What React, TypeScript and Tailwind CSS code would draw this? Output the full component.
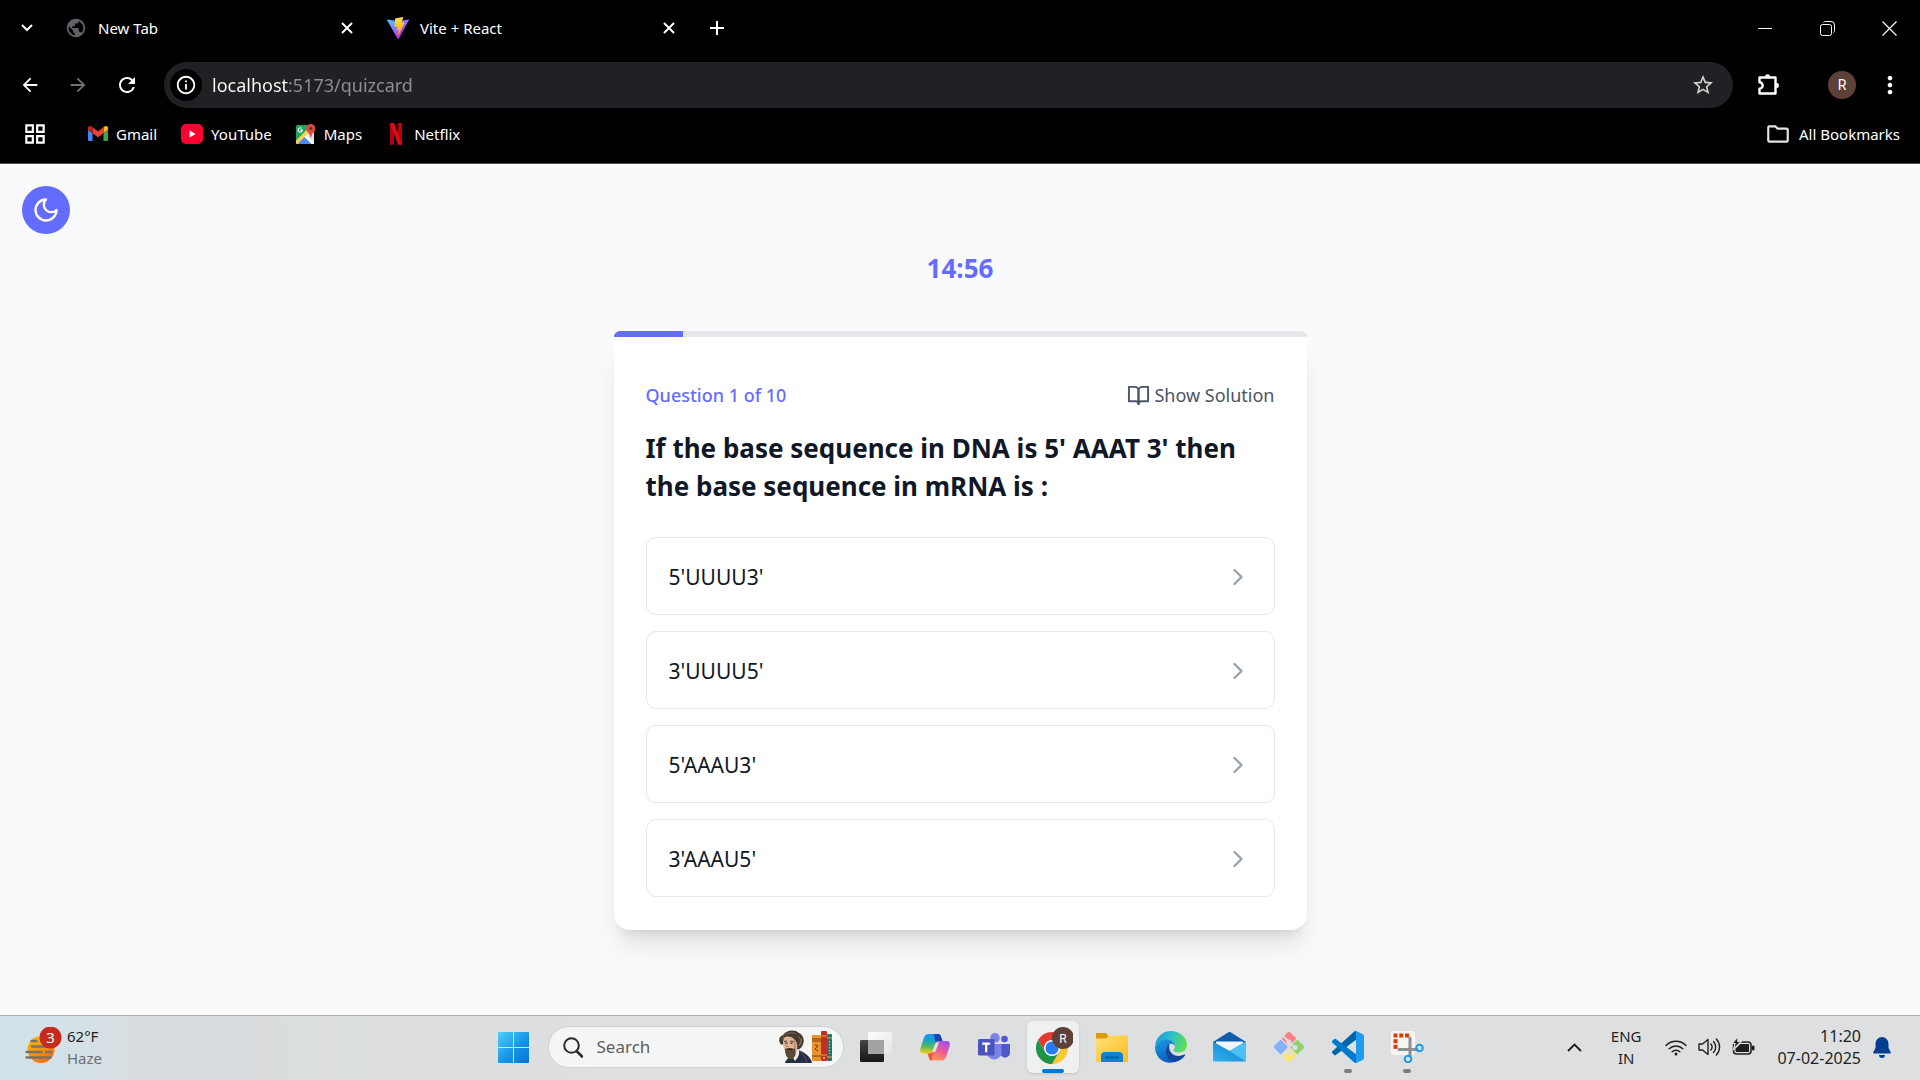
import type { ReactNode } from 'react';
import {
  MdArrowBack,
  MdArrowForward,
  MdGridView,
  MdInfoOutline,
  MdMoreVert,
  MdOutlineFolder,
  MdPublic,
  MdRefresh,
  MdStarBorder,
} from 'react-icons/md';

/* ---------- Browser icons ---------- */

function ChevronDownIcon() {
  return (
    <svg viewBox="0 0 12 8" className="h-2 w-3" fill="none" stroke="#fff" strokeWidth="2">
      <path d="M1 1l5 5 5-5" />
    </svg>
  );
}

function CloseIcon() {
  return (
    <svg viewBox="0 0 12 12" className="size-3" fill="none" stroke="#fff" strokeWidth="2">
      <path d="M1 1l10 10M11 1L1 11" />
    </svg>
  );
}

function PlusIcon() {
  return (
    <svg viewBox="0 0 14 14" className="size-3.5" fill="none" stroke="#fff" strokeWidth="2">
      <path d="M7 0v14M0 7h14" />
    </svg>
  );
}

function ViteIcon() {
  return (
    <svg viewBox="0 0 256 257" className="size-[22px]">
      <defs>
        <linearGradient id="vite-a" x1="-.828%" x2="57.636%" y1="7.652%" y2="78.411%">
          <stop offset="0%" stopColor="#41D1FF" />
          <stop offset="100%" stopColor="#BD34FE" />
        </linearGradient>
        <linearGradient id="vite-b" x1="43.376%" x2="50.316%" y1="2.242%" y2="89.03%">
          <stop offset="0%" stopColor="#FFEA83" />
          <stop offset="8.333%" stopColor="#FFDD35" />
          <stop offset="100%" stopColor="#FFA800" />
        </linearGradient>
      </defs>
      <path
        fill="url(#vite-a)"
        d="M255.153 37.938L134.897 252.976c-2.483 4.44-8.862 4.466-11.382.048L.875 37.958c-2.746-4.814 1.371-10.646 6.827-9.67l120.385 21.517a6.537 6.537 0 0 0 2.322-.004l117.867-21.483c5.438-.991 9.574 4.796 6.877 9.62Z"
      />
      <path
        fill="url(#vite-b)"
        d="M185.432.063L96.44 17.501a3.268 3.268 0 0 0-2.634 3.014l-5.474 92.456a3.268 3.268 0 0 0 3.997 3.378l24.777-5.718c2.318-.535 4.413 1.507 3.936 3.838l-7.361 36.047c-.495 2.426 1.782 4.5 4.151 3.78l15.304-4.649c2.372-.72 4.652 1.36 4.15 3.788l-11.698 56.621c-.732 3.542 3.979 5.473 5.943 2.437l1.313-2.028l72.516-144.72c1.215-2.423-.88-5.186-3.54-4.672l-25.505 4.922c-2.396.462-4.435-1.77-3.759-4.114l16.646-57.705c.677-2.35-1.37-4.583-3.769-4.113Z"
      />
    </svg>
  );
}

function PuzzleIcon() {
  return (
    <svg viewBox="0 0 24 24" className="size-6">
      <path
        d="M2.500 4.500h16v16h-16v-4.800a2.900 2.900 0 0 0 0-6.400z"
        fill="none"
        stroke="#fff"
        strokeWidth="2.400"
        strokeLinejoin="round"
      />
      <path d="M8 3.800a2.500 2.500 0 0 1 5 0zM19.200 9.800a2.600 2.600 0 0 1 0 5.400z" fill="#fff" />
    </svg>
  );
}

function GmailIcon() {
  return (
    <svg viewBox="52 42 88 66" className="h-[15px] w-5">
      <path fill="#4285f4" d="M58 108h14V74L52 59v43c0 3.32 2.69 6 6 6" />
      <path fill="#34a853" d="M120 108h14c3.32 0 6-2.69 6-6V59l-20 15" />
      <path fill="#fbbc04" d="M120 48v26l20-15v-8c0-7.42-8.47-11.65-14.4-7.2" />
      <path fill="#ea4335" d="M72 74V48l24 18 24-18v26L96 92" />
      <path fill="#c5221f" d="M52 51v8l20 15V48l-5.6-4.2c-5.94-4.45-14.4-.22-14.4 7.2" />
    </svg>
  );
}

function YouTubeIcon() {
  return (
    <svg viewBox="0 0 22 20" className="h-5 w-[22px]">
      <rect width="22" height="20" rx="5" fill="#ff0033" />
      <path d="M8.600 6.600v6.800l6-3.400z" fill="#fff" />
    </svg>
  );
}

function MapsIcon() {
  return (
    <svg viewBox="0 0 20 20" className="size-5">
      <clipPath id="maps-clip">
        <rect x="0" y="1" width="18" height="19" rx="1.5" />
      </clipPath>
      <g clipPath="url(#maps-clip)">
        <rect y="1" width="18" height="19" fill="#1ea362" />
        <path d="M0 20L18 2v18z" fill="#dde1e6" />
        <path d="M1.500 20L10 11l8 9z" fill="#4a89f3" />
        <path d="M0 20v-3.500L13.500 3 16 5.500 1.500 20z" fill="#ffd04b" />
        <path d="M8.200 12.700l2-2L18 18.500V20h-2.500z" fill="#fff" />
      </g>
      <path d="M6.800 5.400H4.300v1h1.300a1.500 1.500 0 1 1-.4-1.600l.8-.8a2.600 2.600 0 1 0 .8 1.400z" fill="#fff" />
      <path d="M14.800 0a4.600 4.600 0 0 0-4.600 4.600c0 3.200 3.800 4.600 4.300 9.200h.6c.5-4.600 4.300-6 4.300-9.200A4.600 4.600 0 0 0 14.800 0z" fill="#dc4b3f" />
      <circle cx="14.800" cy="4.500" r="1.600" fill="#7a231e" />
    </svg>
  );
}

function NetflixIcon() {
  return (
    <svg viewBox="-4 0 20 22" className="h-[22px] w-5">
      <path d="M0 0h4v21.5L0 22z" fill="#b1060f" />
      <path d="M8 0h4v22l-4-.5z" fill="#b1060f" />
      <path d="M0 0h4l8 22-4-.5z" fill="#e50914" />
    </svg>
  );
}

/* ---------- Quiz icons ---------- */

function MoonIcon() {
  return (
    <svg viewBox="0 0 24 24" className="size-7" fill="none" stroke="#fff" strokeWidth="2" strokeLinecap="round" strokeLinejoin="round">
      <path d="M12 3a6 6 0 0 0 9 9 9 9 0 1 1-9-9Z" />
    </svg>
  );
}

function BookIcon() {
  return (
    <svg viewBox="0 0 24 24" className="size-[23px]" fill="none" stroke="currentColor" strokeWidth="2" strokeLinecap="round" strokeLinejoin="round">
      <path d="M2 3h6a4 4 0 0 1 4 4v14a3 3 0 0 0-3-3H2z" />
      <path d="M22 3h-6a4 4 0 0 0-4 4v14a3 3 0 0 1 3-3h7z" />
    </svg>
  );
}

function ChevronRightIcon() {
  return (
    <svg viewBox="0 0 24 24" className="size-7 text-gray-400" fill="none" stroke="currentColor" strokeWidth="2" strokeLinecap="round" strokeLinejoin="round">
      <path d="m9 18 6-6-6-6" />
    </svg>
  );
}

/* ---------- Taskbar icons ---------- */

function WeatherIcon() {
  return (
    <svg viewBox="0 0 38 40" className="h-10 w-[38px]">
      <defs>
        <linearGradient id="sun" x1="0" y1="0" x2=".6" y2="1">
          <stop offset="0" stopColor="#ffc400" />
          <stop offset="1" stopColor="#f0700e" />
        </linearGradient>
      </defs>
      <circle cx="17" cy="22.500" r="13.500" fill="url(#sun)" />
      <g stroke="#76736c" strokeWidth="2.400" strokeLinecap="round">
        <path d="M7.500 14h5M8 19.500h20M2.500 25h15M22 25h5M2.500 30.500h24" />
      </g>
      <circle cx="26.500" cy="10.500" r="11" fill="#c42b1c" />
      <text x="26.500" y="15.500" textAnchor="middle" fontSize="15" fill="#fff" fontFamily="Noto Sans, sans-serif">
        3
      </text>
    </svg>
  );
}

function WindowsIcon() {
  return (
    <svg viewBox="0 0 31 31" className="size-[31px]">
      <defs>
        <linearGradient id="win" x1="0" y1="0" x2="1" y2="1" gradientUnits="objectBoundingBox">
          <stop offset="0" stopColor="#4fd0fb" />
          <stop offset=".55" stopColor="#1795e6" />
          <stop offset="1" stopColor="#0275d0" />
        </linearGradient>
      </defs>
      <path d="M1 0h14v15H0V1a1 1 0 0 1 1-1zM16 0h14a1 1 0 0 1 1 1v14H16zM0 16h15v15H1a1 1 0 0 1-1-1zM16 16h15v14a1 1 0 0 1-1 1H16z" fill="url(#win)" />
    </svg>
  );
}

function SearchIcon() {
  return (
    <svg viewBox="0 0 20 21" className="h-[21px] w-5" fill="none" stroke="#2b2b2b" strokeLinecap="round">
      <circle cx="8.500" cy="8.500" r="7.300" strokeWidth="2" />
      <path d="M14 14.500l5 5" strokeWidth="2.600" />
    </svg>
  );
}

function AuthorIcon() {
  return (
    <svg viewBox="0 0 54 34" className="h-[34px] w-[54px]">
      <path d="M6 33c1-4 5-6 9-8l5-5c5 2 12 7 13 13z" fill="#262d40" />
      <path d="M17 21l3-2c1 5-1 9-4 12l-2-3z" fill="#e9e9ec" />
      <path d="M21 21c4 4 6 8 7 12" fill="none" stroke="#4b5570" strokeWidth="1" />
      <path d="M4 7C7 3 15 3 18 7c2 4 2 9 0 14l-4 3-7-1C5 20 5 17 4 15c-1-3-1-5 0-8z" fill="#dfb597" />
      <path d="M14 7c3 2 4 6 3 12l-2 3c-1-5 1-9-1-15z" fill="#c4916f" />
      <path d="M1 13C-1 9 1 6 4 5c3-5 12-6 16-2 4 2 6 7 4 11-1 4-4 6-6 5 1-4 0-8-3-10C12 6 7 6 5 8c-1 2-1 4-1 6-1 1-2 1-3-1z" fill="#45382c" />
      <path d="M4 6c3-3 9-4 13-2M19 6c3 3 3 6 1 9M22 8c1 3 0 6-2 8M2 9c1-1 2-2 3-2" fill="none" stroke="#85725b" strokeWidth="1" />
      <path d="M5 11.500l3-.5M11 11l3.500.5" stroke="#4d382b" strokeWidth="1" />
      <path d="M6 13.200h1.600M11.500 13.200h2" stroke="#2b211b" strokeWidth="1.200" />
      <path d="M8.800 12l-1.500 4.500 2.200.3" fill="none" stroke="#a9775a" strokeWidth=".8" />
      <path d="M6 19c2-1.500 7-1.500 10 0 1.500 4 .5 9-4 10.500C7.500 29 6 24 6 19z" fill="#5a4a36" />
      <path d="M8 19.500h5" stroke="#3a2d20" strokeWidth="1.200" />
      <rect x="33" y="5" width="9" height="26" rx="1" fill="#e8912d" />
      <path d="M33 9h9M33 11h9M33 26h9" stroke="#7d3f10" strokeWidth="1" />
      <path d="M36 15l3 1-3 3 3 2" fill="none" stroke="#6d3510" strokeWidth="1" />
      <rect x="42" y="1" width="6" height="30" rx="1" fill="#c22e25" />
      <path d="M42 6h6M42 25h6" stroke="#e8a63b" strokeWidth="1" />
      <path d="M44 28h2" stroke="#f3c65a" strokeWidth="1.500" />
      <rect x="48" y="4" width="5" height="27" rx="1" fill="#27706e" />
      <path d="M48 8h5M48 27h5" stroke="#d6b45a" strokeWidth="1" />
      <path d="M50.500 11v13" stroke="#d6b45a" strokeWidth="1.400" strokeDasharray="1.500 1.500" />
    </svg>
  );
}

function TaskViewIcon() {
  return (
    <svg viewBox="0 0 32 32" className="size-8">
      <defs>
        <linearGradient id="tv-a" x1="0" y1="0" x2="0" y2="1">
          <stop offset="0" stopColor="#454545" />
          <stop offset="1" stopColor="#151515" />
        </linearGradient>
        <linearGradient id="tv-b" x1="0" y1="0" x2="1" y2="1">
          <stop offset="0" stopColor="#fff" />
          <stop offset="1" stopColor="#e3e3e3" />
        </linearGradient>
      </defs>
      <rect x="0" y="9" width="24" height="22" rx="1" fill="url(#tv-a)" />
      <rect x="8" y="1" width="24" height="22" rx="1" fill="url(#tv-b)" />
      <rect x="8" y="9" width="16" height="14" fill="#a3a3a3" />
    </svg>
  );
}

function CopilotIcon() {
  return (
    <svg viewBox="0 0 32 32" className="size-8">
      <defs>
        <linearGradient id="cp-a" x1=".4" y1="0" x2=".3" y2="1">
          <stop offset="0" stopColor="#1b93ef" />
          <stop offset=".35" stopColor="#15a8c0" />
          <stop offset=".65" stopColor="#5cb85a" />
          <stop offset="1" stopColor="#f5cf12" />
        </linearGradient>
        <linearGradient id="cp-b" x1=".8" y1="0" x2=".3" y2="1">
          <stop offset="0" stopColor="#a04df2" />
          <stop offset=".5" stopColor="#ee5c93" />
          <stop offset="1" stopColor="#ff9a55" />
        </linearGradient>
      </defs>
      <path d="M10 3h9c2 0 2.700 1.500 3.300 3.500L23.500 10h-4c-2 0-3 1-3.600 3l-2 6c-.7 2-1.700 3.500-4 3.500H5c-3.500 0-4.500-2-3.500-5.500L5 6.500C5.800 4 7.500 3 10 3z" fill="url(#cp-a)" />
      <path d="M15 3h4c2 0 2.700 1.500 3.300 3.500L23.500 10h-4c-1.500 0-2.600.5-3.200 2z" fill="#1b45b5" />
      <path d="M22 29.500h-9c-2 0-2.700-1.500-3.300-3.500L8.500 22.500h2c2 0 3-1 3.600-3l2-6c.7-2 1.700-3.500 4-3.500H27c3.500 0 4.500 2 3.500 5.500L27 26c-.8 2.500-2.500 3.500-5 3.500z" fill="url(#cp-b)" />
      <path d="M13 29.500c-2 0-2.700-1.500-3.300-3.500l-1.200-3.500h2c1.800 0 2.900-.8 3.500-2.500z" fill="#f2593b" />
      <path d="M17 11.500h3l-3.800 9.500h-3z" fill="#e3e0e6" />
    </svg>
  );
}

function TeamsIcon() {
  return (
    <svg viewBox="0 0 32 32" className="size-8">
      <circle cx="26.500" cy="8" r="3.300" fill="#5059c9" />
      <path d="M21 13h11v8.500a5 5 0 0 1-9 3z" fill="#5059c9" />
      <circle cx="17" cy="6.800" r="4.800" fill="#7b83eb" />
      <path d="M9 13h14.500v9a7.300 7.300 0 0 1-14.500 0z" fill="#7b83eb" />
      <rect x="0" y="8" width="16.500" height="16.500" rx="1.500" fill="#4b53bc" />
      <path d="M4.200 11.500h8v2.200H9.300v7.600H7.100v-7.600H4.200z" fill="#fff" />
    </svg>
  );
}

function ChromeIcon() {
  const piece = 'M43.050 13A22 22 0 0 0 4.950 13L14.470 29.500A11 11 0 0 1 24 13z';
  return (
    <svg viewBox="0 0 40 40" className="size-10">
      <g transform="translate(1.500 3.500) scale(.73)">
        <circle cx="24" cy="24" r="12" fill="#fff" />
        <path d={piece} fill="#e33b2e" />
        <path d={piece} fill="#fcc934" transform="rotate(120 24 24)" />
        <path d={piece} fill="#1e9447" transform="rotate(240 24 24)" />
        <circle cx="24" cy="24" r="9" fill="#2a7bf0" />
      </g>
      <circle cx="31" cy="10" r="11" fill="#5d4037" transform="translate(-1 1)" />
      <text x="30" y="15.500" textAnchor="middle" fontSize="12" fill="#fff" fontFamily="Roboto, sans-serif">
        R
      </text>
    </svg>
  );
}

function ExplorerIcon() {
  return (
    <svg viewBox="0 0 34 32" className="h-8 w-[34px]">
      <defs>
        <linearGradient id="fold" x1="0" y1="0" x2="1" y2="1">
          <stop offset="0" stopColor="#ffe07a" />
          <stop offset="1" stopColor="#fbbc1d" />
        </linearGradient>
      </defs>
      <path d="M2 2h9l3 3.500-3 4H1V3a1 1 0 0 1 1-1z" fill="#dd9a09" />
      <path d="M1 7.500h10l3-3h18a1 1 0 0 1 1 1V30a1 1 0 0 1-1 1H2a1 1 0 0 1-1-1z" fill="url(#fold)" />
      <path d="M6 31v-6a4 4 0 0 1 4-4h14a4 4 0 0 1 4 4v6z" fill="#1580cf" />
      <path d="M11 26.500h12" stroke="#0a5ca6" strokeWidth="2" strokeLinecap="round" />
    </svg>
  );
}

function EdgeIcon() {
  return (
    <svg viewBox="0 0 32 32" className="size-8">
      <defs>
        <linearGradient id="ed-a" x1="0" y1=".2" x2="1" y2=".5">
          <stop offset="0" stopColor="#1d8fe0" />
          <stop offset=".45" stopColor="#2bbfcb" />
          <stop offset="1" stopColor="#62de58" />
        </linearGradient>
        <linearGradient id="ed-b" x1="0" y1="0" x2=".4" y2="1">
          <stop offset="0" stopColor="#1b9de2" />
          <stop offset="1" stopColor="#0c5fc0" />
        </linearGradient>
      </defs>
      <path d="M0 15C1 6 8 0 16 0c9 0 16 6.500 16 13.500 0 5-3.500 8-8.500 8-3.500 0-5-1.200-5-2.200 0-1 1.500-1.700 1.500-4.300 0-3.500-3.500-6-8-6C6.500 9 2 11.500 0 15z" fill="url(#ed-a)" />
      <path d="M0 16c1.500-5 6.500-7.500 11.500-7.500 5 0 8.500 3 8.500 6.500 0 0-2.500-3-5.500-2-3 1.200-4 5-2.500 9 1.500 4 5 7 8 8.500-2 1-4 1.500-6 1.300C6 31.300 0 24.500 0 16z" fill="url(#ed-b)" />
      <path d="M14.500 12.700C9 15 9.500 29 19.500 31.200 24 30.500 28 27.500 30 24.500c.4-.7-.2-1.200-.8-.9-6 3-14 1-15-6.600-.1-1.700 0-3 .3-4.300z" fill="#114a9c" />
    </svg>
  );
}

function MailIcon() {
  return (
    <svg viewBox="0 0 33 32" className="h-8 w-[33px]">
      <defs>
        <linearGradient id="ml" x1="0" y1="1" x2="1" y2="0">
          <stop offset="0" stopColor="#2fb4ee" />
          <stop offset="1" stopColor="#1277cc" />
        </linearGradient>
      </defs>
      <path d="M0 11L15 1.400a3 3 0 0 1 3 0L33 11v4H0z" fill="#0f5cab" />
      <path d="M3 10.500h27v9H3z" fill="#f3f5f7" />
      <path d="M0 10.500L16.500 20 33 10.500V29a1.500 1.500 0 0 1-1.500 1.500h-30A1.500 1.500 0 0 1 0 29z" fill="url(#ml)" />
      <path d="M16.500 20L33 10.500V29c0 .6-.3 1-.6 1.200z" fill="#4dc0f6" />
    </svg>
  );
}

function GitIcon() {
  return (
    <svg viewBox="0 0 32 32" className="size-8">
      <g transform="rotate(45 16 16)">
        <rect x="4.800" y="4.800" width="10.600" height="10.600" rx="1.500" fill="#ff7e7e" />
        <rect x="16.600" y="4.800" width="10.600" height="10.600" rx="1.500" fill="#8fd16a" />
        <rect x="4.800" y="16.600" width="10.600" height="10.600" rx="1.500" fill="#82b1ff" />
        <rect x="16.600" y="16.600" width="10.600" height="10.600" rx="1.500" fill="#fde27c" />
      </g>
      <g stroke="#dcdedf" strokeWidth="2" fill="#dcdedf">
        <path d="M10.500 5.500L16 11v11M16 11l5.500 5.500" fill="none" />
        <circle cx="16" cy="11" r="1.600" />
        <circle cx="16" cy="22" r="1.600" />
        <circle cx="22" cy="16.500" r="1.600" />
      </g>
    </svg>
  );
}

function VsCodeIcon() {
  return (
    <svg viewBox="0 0 100 100" className="size-8">
      <path d="M96.500 10.800L75.900.9a6.200 6.200 0 0 0-7.100 1.200L1.300 63.600a4.200 4.200 0 0 0 0 6.200l5.500 5a4.200 4.200 0 0 0 5.300.2L93.400 13.400c2.700-2.100 6.600-.1 6.600 3.300v-.3c0-2.400-1.400-4.600-3.500-5.600z" fill="#0065a9" />
      <path d="M96.500 89.200l-20.600 9.900a6.200 6.200 0 0 1-7.100-1.200L1.300 36.400a4.200 4.200 0 0 1 0-6.200l5.500-5a4.200 4.200 0 0 1 5.300-.2l81.300 61.600c2.700 2.100 6.600.1 6.600-3.300v.3c0 2.400-1.400 4.600-3.500 5.600z" fill="#007acc" />
      <path d="M75.900 99.100a6.200 6.200 0 0 1-7.100-1.200c2.300 2.300 6.200.7 6.200-2.600V4.700c0-3.300-3.900-4.900-6.200-2.600a6.200 6.200 0 0 1 7.100-1.200l20.600 9.900c2.100 1 3.500 3.200 3.500 5.600v67.200c0 2.400-1.400 4.600-3.500 5.600z" fill="#1f9cf0" />
    </svg>
  );
}

function SnippingIcon() {
  return (
    <svg viewBox="0 0 34 32" className="h-8 w-[34px]">
      <rect x="1" y="0" width="24" height="24" rx="2.500" fill="#f5f5f5" />
      <g fill="#d83b01">
        <rect x="3.500" y="2.500" width="4" height="4" />
        <rect x="9.300" y="2.500" width="4" height="4" />
        <rect x="15" y="2.500" width="4" height="4" />
        <rect x="3.500" y="8.200" width="4" height="4" />
        <rect x="3.500" y="13.800" width="4" height="4" />
      </g>
      <path d="M20 7v18M9 18.500h18" stroke="#8b9097" strokeWidth="3" strokeLinecap="round" />
      <circle cx="29.500" cy="17" r="3.300" fill="none" stroke="#1c9be6" strokeWidth="2" />
      <circle cx="18" cy="28" r="3.300" fill="none" stroke="#1c9be6" strokeWidth="2" />
    </svg>
  );
}

function WifiIcon() {
  return (
    <svg viewBox="0 0 22 17" className="h-[17px] w-[22px]" fill="none" stroke="#1f1f1f" strokeWidth="1.500" strokeLinecap="round">
      <path d="M1 6.500a14 14 0 0 1 20 0M4.200 9.800a9.600 9.600 0 0 1 13.600 0M7.200 12.800a5.400 5.400 0 0 1 7.600 0" />
      <circle cx="11" cy="15" r="1.500" fill="#1f1f1f" stroke="none" />
    </svg>
  );
}

function SpeakerIcon() {
  return (
    <svg viewBox="0 0 23 20" className="h-5 w-[23px]" fill="none" stroke="#1f1f1f" strokeWidth="1.400" strokeLinecap="round" strokeLinejoin="round">
      <path d="M1 7h3.500L10 2.500v15L4.500 13H1z" />
      <path d="M12.800 7a4.500 4.500 0 0 1 0 6M15.500 4.500a8 8 0 0 1 0 11M18.300 2a11.500 11.500 0 0 1 0 16" />
    </svg>
  );
}

function BatteryIcon() {
  return (
    <svg viewBox="0 0 23 20" className="h-5 w-[23px]">
      <rect x="1.500" y="5" width="17.500" height="12" rx="3" fill="none" stroke="#1f1f1f" strokeWidth="1.600" />
      <path d="M8 7.500h8.500v7H4v-3.500h1z" fill="#1f1f1f" stroke="#1f1f1f" strokeLinejoin="round" />
      <path d="M20.500 9h1.500v4h-1.500z" fill="#1f1f1f" stroke="#1f1f1f" />
      <path d="M6-.5L0 6.500h3l-1.500 6L9 4.500H5.800z" fill="#1f1f1f" stroke="#dcdedf" strokeWidth="1.200" />
    </svg>
  );
}

function BellIcon() {
  return (
    <svg viewBox="0 0 18 21" className="h-[21px] w-[18px]" fill="#003e92">
      <path d="M9 0a6.500 6.500 0 0 0-6.500 6.500V11L.3 15.300c-.3.700 0 1.200.7 1.200h16c.7 0 1-.5.700-1.200L15.500 11V6.500A6.500 6.500 0 0 0 9 0zM6 18h6a3 3 0 0 1-6 0z" />
    </svg>
  );
}

/* ---------- Browser chrome ---------- */

function Tab({ icon, title }: { icon: ReactNode; title: string }) {
  return (
    <div className="flex w-[322px] items-center gap-[11px] pl-4 pr-2.5">
      <span className="flex w-[22px] justify-center">{icon}</span>
      <span className="flex-1 text-[15px] leading-5">{title}</span>
      <button aria-label={`Close ${title}`} className="flex size-7 items-center justify-center">
        <CloseIcon />
      </button>
    </div>
  );
}

const bookmarks: { label: string; icon: ReactNode }[] = [
  { label: 'Gmail', icon: <GmailIcon /> },
  { label: 'YouTube', icon: <YouTubeIcon /> },
  { label: 'Maps', icon: <MapsIcon /> },
  { label: 'Netflix', icon: <NetflixIcon /> },
];

function BrowserHeader() {
  return (
    <header className="border-b border-neutral-600 bg-black text-white">
      <div className="flex h-14 items-center">
        <button aria-label="Search tabs" className="flex w-[49px] justify-center pl-1">
          <ChevronDownIcon />
        </button>
        <Tab title="New Tab" icon={<MdPublic className="size-[22px] text-[#5f6368]" />} />
        <Tab title="Vite + React" icon={<ViteIcon />} />
        <button aria-label="New tab" className="ml-2 flex size-8 items-center justify-center">
          <PlusIcon />
        </button>
        <div className="ml-auto flex">
          <button aria-label="Minimize" className="flex h-8 w-[62px] items-center justify-center">
            <span className="h-px w-3.5 bg-white" />
          </button>
          <button aria-label="Restore" className="flex h-8 w-[62px] items-center justify-center">
            <svg viewBox="0 0 15 15" className="size-[15px]" fill="none" stroke="#fff">
              <rect x=".5" y="3.500" width="11" height="11" rx="2" />
              <path d="M3.500 1.500C4 .8 4.500.5 5.500.5H11A3.500 3.500 0 0 1 14.500 4v5.500c0 1-.3 1.500-1 2" />
            </svg>
          </button>
          <button aria-label="Close window" className="flex h-8 w-[62px] items-center justify-center">
            <svg viewBox="0 0 15 15" className="size-[15px]" fill="none" stroke="#fff" strokeWidth="1.200">
              <path d="M.5.5l14 14M14.500.5l-14 14" />
            </svg>
          </button>
        </div>
      </div>

      <div className="flex h-[58px] items-center pl-1.5 pr-4">
        <button aria-label="Back" className="flex w-12 justify-center">
          <MdArrowBack className="size-[22px]" />
        </button>
        <button aria-label="Forward" className="flex w-12 justify-center text-neutral-500">
          <MdArrowForward className="size-[22px]" />
        </button>
        <button aria-label="Reload" className="mr-3 flex w-[50px] justify-center">
          <MdRefresh className="size-6" />
        </button>
        <div className="flex h-[46px] flex-1 items-center gap-2.5 rounded-full bg-[#202124] pl-1.5 pr-[18px]">
          <button aria-label="Site information" className="flex size-8 items-center justify-center rounded-full bg-black">
            <MdInfoOutline className="size-[22px]" />
          </button>
          <input
            aria-label="Address"
            defaultValue="localhost:5173/quizcard"
            className="min-w-0 flex-1 bg-[linear-gradient(90deg,#fff_76px,#8f9195_76px)] bg-clip-text text-[18px] leading-6 text-transparent outline-none"
          />
          <button aria-label="Bookmark this page">
            <MdStarBorder className="size-6 text-neutral-300" />
          </button>
        </div>
        <button aria-label="Extensions" className="ml-6 flex">
          <PuzzleIcon />
        </button>
        <button aria-label="Profile" className="ml-[47px] flex size-7 items-center justify-center rounded-full bg-[#5d4037] font-[Roboto,sans-serif] text-sm">
          R
        </button>
        <button aria-label="Menu" className="ml-5 flex">
          <MdMoreVert className="size-7" />
        </button>
      </div>

      <nav className="flex h-[49px] items-center pb-2.5 pl-[22px] pr-5 text-[15px] leading-5">
        <button aria-label="Apps" className="mr-8">
          <MdGridView className="size-[26px]" />
        </button>
        <div className="flex gap-6 pl-2">
          {bookmarks.map((b) => (
            <a key={b.label} href="#" className="flex items-center gap-2">
              {b.icon}
              {b.label}
            </a>
          ))}
        </div>
        <button className="ml-auto flex items-center gap-2">
          <MdOutlineFolder className="size-[26px] text-neutral-200" />
          All Bookmarks
        </button>
      </nav>
    </header>
  );
}

/* ---------- Quiz ---------- */

const options = ["5'UUUU3'", "3'UUUU5'", "5'AAAU3'", "3'AAAU5'"];

function Quiz() {
  return (
    <main className="flex flex-1 flex-col bg-[#f9fafc] text-gray-900">
      <button
        aria-label="Switch to dark mode"
        className="ml-[22px] mt-[22px] flex size-12 items-center justify-center rounded-full bg-[#646cff]"
      >
        <MoonIcon />
      </button>
      <p className="mt-4 text-center text-[26px] leading-9 font-bold text-[#646cff]">14:56</p>

      <section className="mx-auto mt-[45px] w-full max-w-[693px]">
        <div
          role="progressbar"
          aria-label="Quiz progress"
          aria-valuenow={10}
          className="h-1.5 overflow-hidden rounded-t-md bg-gray-200"
        >
          <div className="h-full w-1/10 bg-[#646cff]" />
        </div>
        <div className="rounded-b-2xl bg-white px-8 pt-11 pb-[33px] shadow-xl">
          <div className="flex h-7 items-center justify-between">
            <span className="text-[18px] leading-7 font-medium text-[#646cff]">Question 1 of 10</span>
            <button className="flex items-center gap-1 text-[18px] leading-7 text-gray-600">
              <BookIcon />
              Show Solution
            </button>
          </div>
          <h1 className="mt-5 text-[26px] leading-[38px] font-bold">
            If the base sequence in DNA is 5' AAAT 3' then the base sequence in mRNA is :
          </h1>
          <div className="mt-8 flex flex-col gap-4">
            {options.map((o) => (
              <button
                key={o}
                className="flex h-[78px] items-center justify-between rounded-[10px] border border-gray-200 px-[22px] pt-0.5 text-[21px] leading-8"
              >
                {o}
                <ChevronRightIcon />
              </button>
            ))}
          </div>
        </div>
      </section>
    </main>
  );
}

/* ---------- Taskbar ---------- */

const apps: { label: string; icon: ReactNode; state?: 'active' | 'open' }[] = [
  { label: 'Task view', icon: <TaskViewIcon /> },
  { label: 'Copilot', icon: <CopilotIcon /> },
  { label: 'Teams', icon: <TeamsIcon /> },
  { label: 'Chrome', icon: <ChromeIcon />, state: 'active' },
  { label: 'File Explorer', icon: <ExplorerIcon /> },
  { label: 'Edge', icon: <EdgeIcon /> },
  { label: 'Mail', icon: <MailIcon /> },
  { label: 'Git', icon: <GitIcon /> },
  { label: 'Visual Studio Code', icon: <VsCodeIcon />, state: 'open' },
  { label: 'Snipping Tool', icon: <SnippingIcon />, state: 'open' },
];

function Taskbar() {
  return (
    <footer className="grid h-[65px] grid-cols-[1fr_auto_1fr] items-center border-t border-[#a9abae] bg-[linear-gradient(90deg,#d0e2ea_0px,#d3e2e8_60px,#d9dcde_150px,#dddfe0_600px,#dddfe1_100%)] pb-0.5 text-[15px] leading-[22px] text-[#1f1f1f]">
      <button className="flex items-center gap-[5px] pl-6 text-left">
        <WeatherIcon />
        <span>
          <span className="block">62°F</span>
          <span className="block text-[#6b6f72]">Haze</span>
        </span>
      </button>

      <div className="flex items-center">
        <button aria-label="Start" className="mr-2 flex size-[52px] items-center justify-center">
          <WindowsIcon />
        </button>
        <label className="mr-1.5 flex h-[42px] w-[296px] items-center gap-3.5 rounded-full border border-[#cfd1d2] bg-[#f4f5f5] pl-3.5 pr-2.5">
          <SearchIcon />
          <input
            aria-label="Search"
            placeholder="Search"
            className="min-w-0 flex-1 bg-transparent text-[17px] leading-6 outline-none placeholder:text-[#5f5f5f]"
          />
          <AuthorIcon />
        </label>
        <div className="flex gap-[7px]">
          {apps.map((a) => (
            <button
              key={a.label}
              aria-label={a.label}
              className={
                a.state === 'active'
                  ? 'relative flex size-[52px] items-center justify-center rounded-md bg-[#eff0f1] shadow-sm'
                  : 'relative flex size-[52px] items-center justify-center'
              }
            >
              {a.icon}
              {a.state === 'active' && (
                <span className="absolute bottom-0 left-1/2 h-1 w-[22px] -translate-x-1/2 rounded-full bg-[#0078d4]" />
              )}
              {a.state === 'open' && (
                <span className="absolute bottom-0 left-1/2 h-1 w-2 -translate-x-1/2 rounded-full bg-[#7d7d7d]" />
              )}
            </button>
          ))}
        </div>
      </div>

      <div className="flex items-center justify-end pr-[29px]">
        <button aria-label="Show hidden icons" className="mr-[29px]">
          <svg viewBox="0 0 15 9" className="h-[9px] w-[15px]" fill="none" stroke="#1f1f1f" strokeWidth="1.800">
            <path d="M1 8l6.500-6.500L14 8" />
          </svg>
        </button>
        <button className="mr-6 text-center">
          <span className="block">ENG</span>
          <span className="block">IN</span>
        </button>
        <button aria-label="Network, volume and battery" className="mr-[22px] flex items-center gap-[11px]">
          <WifiIcon />
          <SpeakerIcon />
          <BatteryIcon />
        </button>
        <time className="mr-3 text-right text-[16px]">
          <span className="block">11:20</span>
          <span className="block">07-02-2025</span>
        </time>
        <button aria-label="Notifications">
          <BellIcon />
        </button>
      </div>
    </footer>
  );
}

export default function App() {
  return (
    <div className="flex min-h-screen flex-col font-['Noto_Sans',sans-serif]">
      <BrowserHeader />
      <Quiz />
      <Taskbar />
    </div>
  );
}
